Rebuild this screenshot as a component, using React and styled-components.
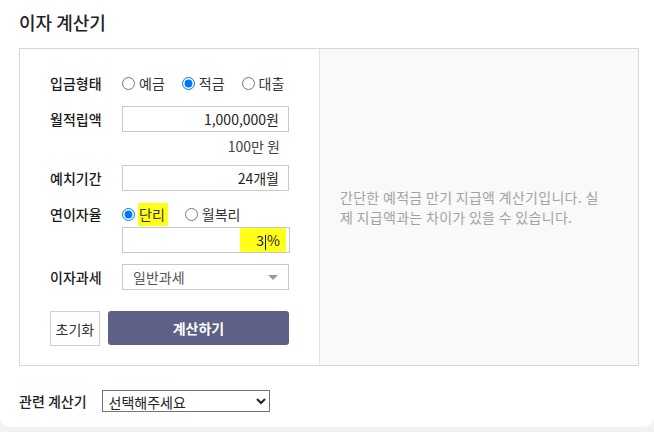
import React from 'react';
import styled, { createGlobalStyle } from 'styled-components';

const GlobalStyle = createGlobalStyle`
  html, body {
    margin: 0;
    padding: 0;
    background: #f1f2f4;
  }
  body {
    font-family: "Noto Sans CJK KR", "Noto Sans", sans-serif;
    color: #222;
  }
`;

const Card = styled.div`
  width: 654px;
  height: 427px;
  box-sizing: border-box;
  background: #fff;
  border-radius: 0 0 10px 10px;
  padding: 0 16px 0 19px;
`;

const Title = styled.h2`
  margin: 0;
  padding-top: 9px;
  font-size: 18px;
  line-height: 26px;
  font-weight: 500;
  color: #222;
`;

const Box = styled.div`
  margin-top: 13px;
  width: 620px;
  height: 318px;
  box-sizing: border-box;
  border: 1px solid #d6d6d6;
  display: grid;
  grid-template-columns: 300px 1fr;
`;

const Form = styled.div`
  padding: 21px 30px 0 30px;
  border-right: 1px solid #e2e2e2;
`;

const Row = styled.div`
  display: flex;
  align-items: center;
  height: ${p => p.h || 26}px;
  margin-top: ${p => p.mt || 0}px;
`;

const Label = styled.span`
  width: 72px;
  flex: none;
  font-size: 14px;
  font-weight: 500;
  color: #1a1a1a;
`;

const Radios = styled.div`
  display: flex;
  align-items: center;
  gap: 17px;
`;

const RadioLabel = styled.label`
  display: flex;
  align-items: center;
  font-size: 14px;
  color: #333;
  input {
    margin: 0 4px 0 0;
    width: 13px;
    height: 13px;
  }
`;

const Mark = styled.span`
  background: #ffff1a;
  padding: 1px 3px 2px 1px;
  margin-left: -1px;
`;

const Field = styled.div`
  width: 168px;
  height: 26px;
  box-sizing: border-box;
  border: 1px solid #c8c8c8;
  display: flex;
  align-items: center;
  justify-content: ${p => (p.left ? 'space-between' : 'flex-end')};
  padding: 0 9px 0 10px;
  font-size: 14px;
  color: ${p => (p.left ? '#555' : '#222')};
  background: #fff;
`;

const Indent = styled.div`
  margin-left: 72px;
`;

const Hint = styled.div`
  width: 168px;
  margin-left: 72px;
  box-sizing: border-box;
  padding-right: 10px;
  text-align: right;
  font-size: 14px;
  line-height: 20px;
  height: 20px;
  margin-top: 4px;
  color: #444;
`;

const PercentMark = styled.span`
  background: #ffff1a;
  padding: 2px 6px 2px 16px;
  margin-right: -6px;
`;

const Caret = styled.span`
  display: inline-block;
  width: 1px;
  height: 15px;
  background: #111;
  vertical-align: middle;
  margin: 0 1px;
`;

const Triangle = styled.span`
  width: 0;
  height: 0;
  border-left: 5px solid transparent;
  border-right: 5px solid transparent;
  border-top: 5px solid #999;
  margin-right: 1px;
`;

const Buttons = styled.div`
  display: flex;
  gap: 8px;
  margin-top: 21px;
`;

const ResetButton = styled.button`
  width: 50px;
  height: 35px;
  box-sizing: border-box;
  border: 1px solid #cfcfcf;
  background: #fff;
  font-family: inherit;
  font-size: 14px;
  color: #333;
  padding: 0;
  cursor: pointer;
`;

const CalcButton = styled.button`
  width: 182px;
  height: 34px;
  border: none;
  border-radius: 3px;
  background: #5d6185;
  color: #fff;
  font-family: inherit;
  font-size: 14px;
  font-weight: 700;
  cursor: pointer;
`;

const Info = styled.div`
  background: #f9f9fa;
  display: flex;
  align-items: center;
  padding: 0 33px 0 20px;
  font-size: 14px;
  letter-spacing: 0.3px;
  line-height: 20px;
  color: #a3a3a3;
  word-break: break-all;
`;

const Related = styled.div`
  display: flex;
  align-items: center;
  margin-top: 24px;
  gap: 15px;
`;

const RelatedLabel = styled.span`
  font-size: 14px;
  font-weight: 500;
  color: #222;
`;

const Select = styled.select`
  width: 168px;
  height: 22px;
  border: 1px solid #767676;
  border-radius: 0;
  font-family: inherit;
  font-size: 14px;
  color: #222;
  background: #fff;
  padding: 0 2px;
`;

export default function App() {
  return (
    <>
      <GlobalStyle />
      <Card>
        <Title>이자 계산기</Title>
        <Box>
          <Form>
            <Row>
              <Label>입금형태</Label>
              <Radios>
                <RadioLabel><input type="radio" name="kind" />예금</RadioLabel>
                <RadioLabel><input type="radio" name="kind" defaultChecked />적금</RadioLabel>
                <RadioLabel><input type="radio" name="kind" />대출</RadioLabel>
              </Radios>
            </Row>
            <Row mt={10}>
              <Label>월적립액</Label>
              <Field>1,000,000원</Field>
            </Row>
            <Hint>100만 원</Hint>
            <Row mt={9}>
              <Label>예치기간</Label>
              <Field>24개월</Field>
            </Row>
            <Row mt={11} h={24}>
              <Label>연이자율</Label>
              <Radios>
                <RadioLabel><input type="radio" name="rate" defaultChecked /><Mark>단리</Mark></RadioLabel>
                <RadioLabel><input type="radio" name="rate" />월복리</RadioLabel>
              </Radios>
            </Row>
            <Row mt={1}>
              <Indent>
                <Field><PercentMark>3<Caret />%</PercentMark></Field>
              </Indent>
            </Row>
            <Row mt={11}>
              <Label>이자과세</Label>
              <Field left>
                일반과세
                <Triangle />
              </Field>
            </Row>
            <Buttons>
              <ResetButton>초기화</ResetButton>
              <CalcButton>계산하기</CalcButton>
            </Buttons>
          </Form>
          <Info>간단한 예적금 만기 지급액 계산기입니다. 실제 지급액과는 차이가 있을 수 있습니다.</Info>
        </Box>
        <Related>
          <RelatedLabel>관련 계산기</RelatedLabel>
          <Select defaultValue="">
            <option value="">선택해주세요</option>
          </Select>
        </Related>
      </Card>
    </>
  );
}
